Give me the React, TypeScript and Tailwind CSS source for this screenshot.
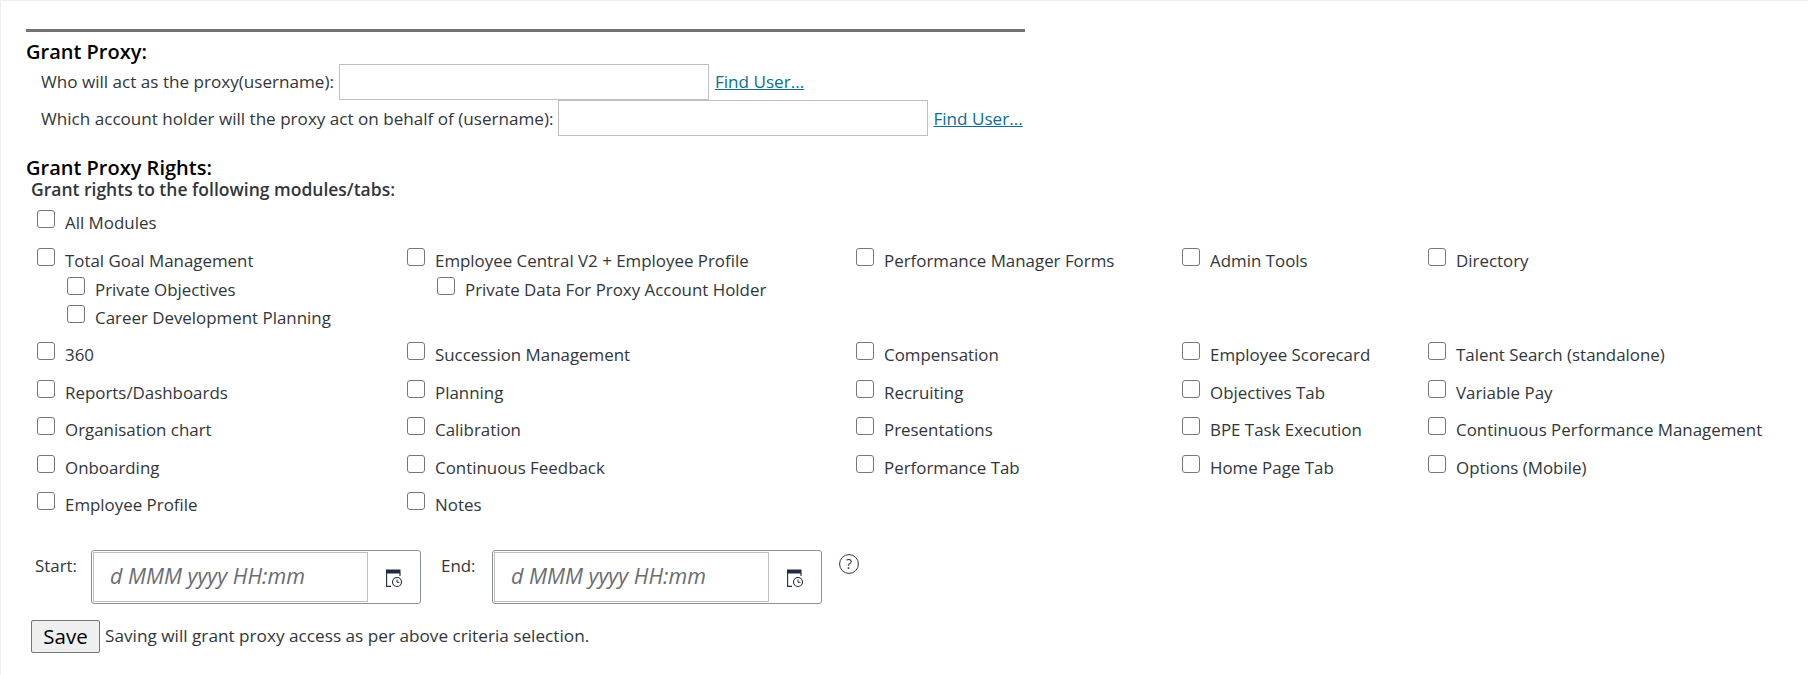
const F = "[font-family:'Open_Sans','Noto_Sans',sans-serif]";

function Check({ label, nested }: { label: string; nested?: boolean }) {
  return (
    <label className={`flex items-start ${nested ? "ml-[30px] h-[28.5px]" : "h-[28.5px]"}`}>
      <span className="mt-[1px] h-[18px] w-[18px] shrink-0 rounded-[3px] border-[1.5px] border-[#767676] bg-white" />
      <span className="ml-[10px] mt-[3px] whitespace-nowrap text-[16.9px] leading-[22px] text-[#32363a]">{label}</span>
    </label>
  );
}

const rows: string[][] = [
  ["360", "Succession Management", "Compensation", "Employee Scorecard", "Talent Search (standalone)"],
  ["Reports/Dashboards", "Planning", "Recruiting", "Objectives Tab", "Variable Pay"],
  ["Organisation chart", "Calibration", "Presentations", "BPE Task Execution", "Continuous Performance Management"],
  ["Onboarding", "Continuous Feedback", "Performance Tab", "Home Page Tab", "Options (Mobile)"],
  ["Employee Profile", "Notes"],
];

function CalIcon() {
  return (
    <svg width="18" height="20" viewBox="0 0 18 20" fill="none">
      <path d="M1 1.5h14.5v4H1z" fill="#1d2d3e" />
      <path d="M1.6 5v13.4h4.4M15 5v3" stroke="#1d2d3e" strokeWidth="1.1" />
      <circle cx="12" cy="14" r="4.5" stroke="#1d2d3e" strokeWidth="1.1" />
      <path d="M12 11.5V14.3h2.4" stroke="#1d2d3e" strokeWidth="1" />
    </svg>
  );
}

function DateField() {
  return (
    <div className="flex h-[54px] w-[330px] rounded-[3px] border border-[#89919a] bg-white">
      <div className="my-[1px] ml-[1px] flex flex-1 items-center border border-[#bfbfbf] pl-[16px] text-[21.5px] italic text-[#6a6d70]">
        d MMM yyyy HH:mm
      </div>
      <div className="flex w-[52px] items-center justify-center pt-[2px]"><CalIcon /></div>
    </div>
  );
}

export default function App() {
  return (
    <div className={`${F} h-[675px] w-[1808px] overflow-hidden border-l border-t border-[#eeeeee] bg-white pl-[25px] text-[#32363a]`}>
      <div className="mt-[28px] h-[3px] w-[999px] bg-[#737373]" />
      <h2 className="mt-[9px] text-[20px] font-semibold leading-[22px] text-black">Grant Proxy:</h2>
      <div className="ml-[15px] flex h-[37px] items-center text-[17.1px]">
        <span className="mr-[5px] pt-[1px]">Who will act as the proxy(username):</span>
        <div className="h-[36px] w-[370px] border border-[#bfbfbf]" />
        <a className="ml-[6px] pt-[1px] text-[#0a6e96] underline">Find User...</a>
      </div>
      <div className="ml-[15px] flex h-[36px] items-center text-[17.1px]">
        <span className="mr-[5px] pt-[1px]">Which account holder will the proxy act on behalf of (username):</span>
        <div className="h-[36px] w-[370px] border border-[#bfbfbf]" />
        <a className="ml-[5px] pt-[1px] text-[#0a6e96] underline">Find User...</a>
      </div>
      <h2 className="mt-[21px] text-[20px] font-semibold leading-[22px] text-black">Grant Proxy Rights:</h2>
      <div className="ml-[5px] text-[17.5px] font-semibold leading-[20px]">Grant rights to the following modules/tabs:</div>
      <div className="ml-[11px] mt-[10px]">
        <div className="h-[38px]"><Check label="All Modules" /></div>
        <div className="grid grid-cols-[370px_449px_326px_246px_1fr]">
          <div className="h-[94px]">
            <Check label="Total Goal Management" />
            <Check nested label="Private Objectives" />
            <Check nested label="Career Development Planning" />
          </div>
          <div>
            <Check label="Employee Central V2 + Employee Profile" />
            <Check nested label="Private Data For Proxy Account Holder" />
          </div>
          <Check label="Performance Manager Forms" />
          <Check label="Admin Tools" />
          <Check label="Directory" />
          {rows.flatMap((r) => r.map((l) => <div key={l} className="h-[37.5px]"><Check label={l} /></div>))}
        </div>
      </div>
      <div className="ml-[9px] mt-[21px] flex items-start">
        <span className="mt-[3px] w-[56px] text-[16.9px]">Start:</span>
        <DateField />
        <span className="ml-[20px] mt-[3px] w-[51px] text-[16.9px]">End:</span>
        <DateField />
        <svg className="ml-[16px] mt-[3px]" width="22" height="22" viewBox="0 0 22 22" fill="none">
          <circle cx="11" cy="11" r="9.4" stroke="#32363a" />
          <text x="11" y="16" textAnchor="middle" fontSize="14" fill="#32363a">?</text>
        </svg>
      </div>
      <div className="ml-[5px] mt-[16px] flex items-center">
        <button className="h-[33px] w-[69px] rounded-[2px] border border-[#767676] bg-[#efefef] text-[20.5px] text-black">Save</button>
        <span className="ml-[5px] text-[17.2px]">Saving will grant proxy access as per above criteria selection.</span>
      </div>
    </div>
  );
}
